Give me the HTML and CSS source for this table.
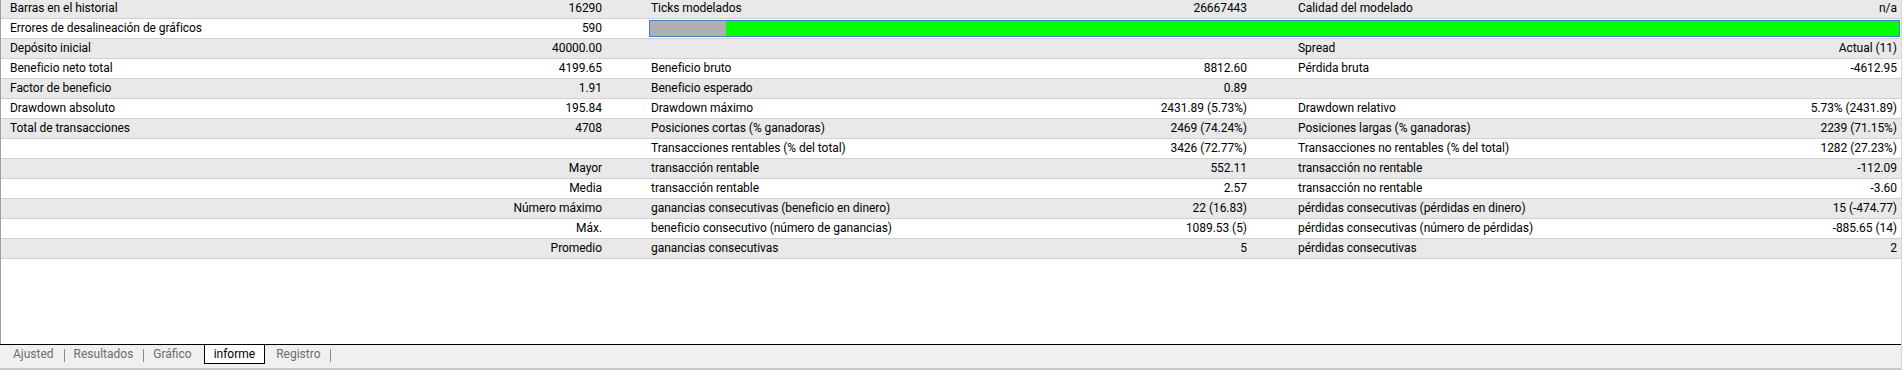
FILE: index.html
```html
<!DOCTYPE html>
<html lang="es">
<head>
<meta charset="utf-8">
<title>Informe</title>
<link rel="stylesheet" href="styles.css">
</head>
<body>
<div class="window">
  <div class="report">
    <div class="table">
      <div class="row alt">
        <span class="lbl first">Barras en el historial</span><span class="val v1">16290</span>
        <span class="lbl">Ticks modelados</span><span class="val v2">26667443</span>
        <span class="lbl">Calidad del modelado</span><span class="val v3">n/a</span>
      </div>
      <div class="row">
        <span class="lbl first">Errores de desalineación de gráficos</span><span class="val v1">590</span>
        <div class="quality"><div class="q-gray"></div><div class="q-green"></div></div>
      </div>
      <div class="row alt">
        <span class="lbl first">Depósito inicial</span><span class="val v1">40000.00</span>
        <span class="lbl"></span><span class="val v2"></span>
        <span class="lbl">Spread</span><span class="val v3">Actual (11)</span>
      </div>
      <div class="row">
        <span class="lbl first">Beneficio neto total</span><span class="val v1">4199.65</span>
        <span class="lbl">Beneficio bruto</span><span class="val v2">8812.60</span>
        <span class="lbl">Pérdida bruta</span><span class="val v3">-4612.95</span>
      </div>
      <div class="row alt">
        <span class="lbl first">Factor de beneficio</span><span class="val v1">1.91</span>
        <span class="lbl">Beneficio esperado</span><span class="val v2">0.89</span>
        <span class="lbl"></span><span class="val v3"></span>
      </div>
      <div class="row">
        <span class="lbl first">Drawdown absoluto</span><span class="val v1">195.84</span>
        <span class="lbl">Drawdown máximo</span><span class="val v2">2431.89 (5.73%)</span>
        <span class="lbl">Drawdown relativo</span><span class="val v3">5.73% (2431.89)</span>
      </div>
      <div class="row alt">
        <span class="lbl first">Total de transacciones</span><span class="val v1">4708</span>
        <span class="lbl">Posiciones cortas (% ganadoras)</span><span class="val v2">2469 (74.24%)</span>
        <span class="lbl">Posiciones largas (% ganadoras)</span><span class="val v3">2239 (71.15%)</span>
      </div>
      <div class="row">
        <span class="lbl first"></span><span class="val v1"></span>
        <span class="lbl">Transacciones rentables (% del total)</span><span class="val v2">3426 (72.77%)</span>
        <span class="lbl">Transacciones no rentables (% del total)</span><span class="val v3">1282 (27.23%)</span>
      </div>
      <div class="row alt">
        <span class="lbl first"></span><span class="val v1">Mayor</span>
        <span class="lbl">transacción rentable</span><span class="val v2">552.11</span>
        <span class="lbl">transacción no rentable</span><span class="val v3">-112.09</span>
      </div>
      <div class="row">
        <span class="lbl first"></span><span class="val v1">Media</span>
        <span class="lbl">transacción rentable</span><span class="val v2">2.57</span>
        <span class="lbl">transacción no rentable</span><span class="val v3">-3.60</span>
      </div>
      <div class="row alt">
        <span class="lbl first"></span><span class="val v1">Número máximo</span>
        <span class="lbl">ganancias consecutivas (beneficio en dinero)</span><span class="val v2">22 (16.83)</span>
        <span class="lbl">pérdidas consecutivas (pérdidas en dinero)</span><span class="val v3">15 (-474.77)</span>
      </div>
      <div class="row">
        <span class="lbl first"></span><span class="val v1">Máx.</span>
        <span class="lbl">beneficio consecutivo (número de ganancias)</span><span class="val v2">1089.53 (5)</span>
        <span class="lbl">pérdidas consecutivas (número de pérdidas)</span><span class="val v3">-885.65 (14)</span>
      </div>
      <div class="row alt">
        <span class="lbl first"></span><span class="val v1">Promedio</span>
        <span class="lbl">ganancias consecutivas</span><span class="val v2">5</span>
        <span class="lbl">pérdidas consecutivas</span><span class="val v3">2</span>
      </div>
    </div>
  </div>
  <div class="tabs">
    <span class="tab">Ajusted</span><span class="sep"></span>
    <span class="tab">Resultados</span><span class="sep"></span>
    <span class="tab">Gráfico</span>
    <span class="tab active">informe</span>
    <span class="tab">Registro</span><span class="sep"></span>
  </div>
</div>
</body>
</html>
```

FILE: styles.css
```css
html, body {
  margin: 0;
  padding: 0;
  background: #ffffff;
}

body {
  font-family: Roboto, "Liberation Sans", sans-serif;
  font-size: 12px;
  color: #000000;
}

.window {
  width: 1902px;
  height: 370px;
  display: flex;
  flex-direction: column;
  box-sizing: border-box;
  border-right: 1px solid #d6d6d6;
}

.report {
  flex: 1;
  min-height: 0;
  border-left: 1px solid #a0a0a0;
  background: #ffffff;
  overflow: hidden;
}

.table {
  margin-top: -1px;
}

.row {
  display: grid;
  grid-template-columns: 339px 305px 340px 307px 340px 1fr;
  height: 20px;
  box-sizing: border-box;
  border-bottom: 1px solid #d0d0d0;
  background: #ffffff;
  align-items: center;
  line-height: 19px;
  white-space: nowrap;
  letter-spacing: -0.05px;
}

.row.alt {
  background: #e9e9e9;
}

.lbl {
  padding-left: 6px;
  overflow: hidden;
}

.lbl.first {
  padding-left: 9px;
}

.val {
  text-align: right;
}

.v1 {
  padding-right: 43px;
}

.v2 {
  padding-right: 45px;
}

.v3 {
  padding-right: 4px;
}

.quality {
  grid-column: 3 / -1;
  margin: 0 1px 0 4px;
  height: 17px;
  box-sizing: border-box;
  border: 1px solid #3c82c4;
  display: flex;
}

.q-gray {
  width: 76px;
  background: #b0b0b0;
}

.q-green {
  flex: 1;
  background: #00ff00;
}

.tabs {
  height: 26px;
  box-sizing: border-box;
  border-top: 1px solid #000000;
  border-bottom: 2px solid #c8c8c8;
  background: #f0f0f0;
  display: flex;
  align-items: flex-start;
  padding-left: 4px;
}

.tab {
  height: 18px;
  line-height: 18px;
  padding: 0 10px 0 9px;
  color: #6d6d6d;
  white-space: nowrap;
}

.tab.active {
  background: #ffffff;
  color: #000000;
  border: 1px solid #000000;
  border-top: none;
  padding: 0 9px;
  margin-left: 2px;
  margin-right: 2px;
}

.sep {
  width: 1px;
  height: 13px;
  margin-top: 4px;
  background: #8c8c8c;
}
```
